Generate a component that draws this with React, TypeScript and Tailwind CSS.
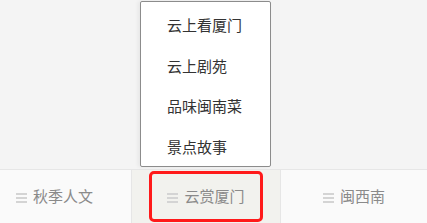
import React from 'react';

const menuItems = ['云上看厦门', '云上剧苑', '品味闽南菜', '景点故事'];

const Bars: React.FC = () => (
  <span className="flex flex-col gap-[2px] w-[11px] mr-[6px] mt-[3px]">
    <span className="h-[2px] bg-[#d4d4d4]" />
    <span className="h-[2px] bg-[#d4d4d4]" />
    <span className="h-[2px] bg-[#d4d4d4]" />
  </span>
);

const App: React.FC = () => {
  return (
    <div
      className="relative w-[427px] h-[223px] bg-[#f4f4f4] flex flex-col overflow-hidden"
      style={{ fontFamily: '"Noto Sans CJK SC", "Noto Sans", sans-serif' }}
    >
      <div className="flex-1" />

      {/* bottom tabs */}
      <div className="h-[54px] flex border-t border-[#e6e6e6] text-[15px] text-[#8a8a8a]">
        <div className="w-[131px] bg-[#fafafa] flex items-center pl-[16px]">
          <Bars />
          <span>秋季人文</span>
        </div>
        <div className="relative w-[150px] bg-[#f2f2ee] border-x border-[#e6e6e6] flex items-center justify-center">
          <Bars />
          <span>云赏厦门</span>
          <div className="absolute left-[17px] right-[17px] top-[1px] bottom-[1px] border-[3px] border-[#ff1a1a] rounded-[5px]" />
        </div>
        <div className="flex-1 bg-[#fafafa] flex items-center justify-center">
          <Bars />
          <span>闽西南</span>
        </div>
      </div>

      {/* popup menu */}
      <div className="absolute left-[140px] top-[1px] w-[131px] h-[166px] bg-white border border-[#8c8c8c] rounded-[2px] shadow-[-2px_0_4px_rgba(0,0,0,0.06)] pt-[3px]">
        {menuItems.map((item) => (
          <div key={item} className="h-[40.5px] flex items-center pl-[26px] text-[15px] text-[#333]">
            {item}
          </div>
        ))}
      </div>
    </div>
  );
};

export default App;
